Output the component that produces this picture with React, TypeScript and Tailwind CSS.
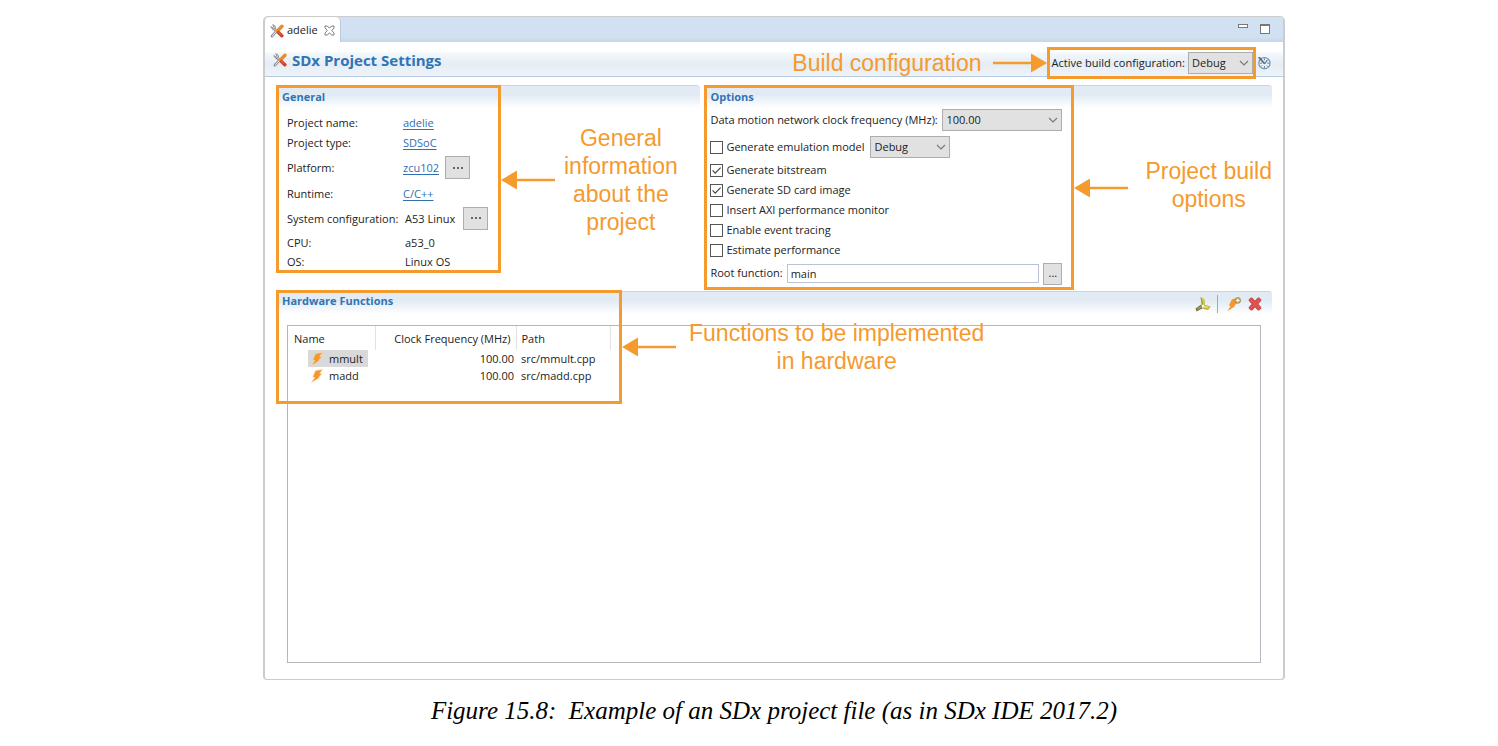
import type { ReactNode } from "react";

function ToolsIcon() {
  return (
    <svg viewBox="0 0 14 14" className="size-[14px] shrink-0" aria-hidden="true">
      <path d="M3.4 4.2 8 8.6" stroke="#858585" strokeWidth="2.8" strokeLinecap="round" />
      <path d="M3.6 4.4 8 8.6" stroke="#dcdcdc" strokeWidth="1.2" strokeLinecap="round" />
      <path d="M.8 2.4 2.4 3.8 3.8 2.6 2.6.8A2.8 2.8 0 0 1 5.4 4.4 2.8 2.8 0 0 1 .8 2.4Z" fill="#cfcfcf" stroke="#858585" strokeWidth=".8" />
      <path d="M6.4 7.4 2 12.2" stroke="#858585" strokeWidth="2.6" strokeLinecap="round" />
      <path d="M6.4 7.4 2.2 12" stroke="#e6e6e6" strokeWidth="1.1" strokeLinecap="round" />
      <path d="M12 2.2 7.6 6.8" stroke="#ef8a2c" strokeWidth="3.4" strokeLinecap="round" />
      <path d="M8.6 8.6 11.8 11.8" stroke="#cf3f2a" strokeWidth="3.4" strokeLinecap="round" />
      <path d="M8.4 8.2 10.6 10.4" stroke="#ea7a55" strokeWidth="1" strokeLinecap="round" />
    </svg>
  );
}

function CloseIcon() {
  return (
    <svg viewBox="0 0 11 11" className="size-[11px]" fill="#fff" stroke="#6d6d6d" strokeWidth=".9" aria-hidden="true">
      <path d="M1 1h2.4l2.1 2.2L7.6 1H10v1.8L7.8 5.5 10 8.2V10H7.6L5.5 7.8 3.4 10H1V8.2l2.2-2.7L1 2.8Z" />
    </svg>
  );
}

function BoltIcon() {
  return (
    <svg viewBox="0 0 14 14" className="size-[14px] shrink-0" aria-hidden="true">
      <path d="M5.6 1.6 12.4.6 9.8 4.4 11.8 5 8.6 8.2 9.4 8.8 1.4 13.6 4.8 8.6 2.8 7.8Z" fill="#f6962c" stroke="#fbd6a8" strokeWidth=".6" />
    </svg>
  );
}

function Chevron() {
  return (
    <svg viewBox="0 0 10 6" className="pointer-events-none absolute right-[4px] top-1/2 h-[6px] w-[10px] -translate-y-1/2" aria-hidden="true">
      <path d="M1 1l4 4 4-4" fill="none" stroke="#7a7a7a" strokeWidth="1.2" />
    </svg>
  );
}

function Dropdown({
  id,
  value,
  options,
  className,
  label,
}: {
  id: string;
  value: string;
  options: string[];
  className: string;
  label?: string;
}) {
  return (
    <span className={`relative inline-flex ${className}`}>
      <select
        id={id}
        aria-label={label}
        defaultValue={value}
        className="h-[22px] w-full appearance-none border border-[#adadad] bg-[#e1e1e1] pl-[3px] text-[11px] leading-[20px] text-[#222]"
      >
        {options.map((o) => (
          <option key={o}>{o}</option>
        ))}
      </select>
      <Chevron />
    </span>
  );
}

function BrowseButton({ label }: { label: string }) {
  return (
    <button
      type="button"
      aria-label={label}
      className="flex h-[23px] w-[25px] items-center justify-center border border-[#adadad] bg-[#e1e1e1]"
    >
      <svg viewBox="0 0 10 2" className="h-[2px] w-[10px]" fill="#666" aria-hidden="true">
        <path d="M0 0h2v2H0zM4 0h2v2H4zM8 0h2v2H8z" />
      </svg>
    </button>
  );
}

function ArrowLeft() {
  return (
    <svg viewBox="0 0 54 20" className="h-[20px] w-[54px] shrink-0" fill="#f59a2d" aria-hidden="true">
      <path d="M0 10 16 .5v19ZM14 8.7h40v2.6H14z" />
    </svg>
  );
}

function ArrowRight() {
  return (
    <svg viewBox="0 0 54 20" className="h-[20px] w-[54px] shrink-0" fill="#f59a2d" aria-hidden="true">
      <path d="M54 10 38 .5v19Z" />
      <path d="M0 8.7h40v2.6H0z" />
    </svg>
  );
}

function Callout({ children }: { children: ReactNode }) {
  return (
    <p className="whitespace-nowrap text-center font-['Liberation_Sans',sans-serif] text-[23px] leading-[28px] text-[#f59a2d]">
      {children}
    </p>
  );
}

const stripClass =
  "rounded-t-[4px] border-t border-[#c3d5e7] bg-[linear-gradient(#e2ebf4_40%,#ffffff)] bg-[length:100%_22px] bg-no-repeat";

function SectionTitle({ children }: { children: ReactNode }) {
  return <h2 className="pl-[3px] text-[11px] font-bold leading-[18px] text-[#2f74b5]">{children}</h2>;
}

function Check({ id, label, checked = false }: { id: string; label: string; checked?: boolean }) {
  return (
    <span className="flex items-center gap-[3px]">
      <span className="relative flex">
        <input
          id={id}
          type="checkbox"
          defaultChecked={checked}
          className="peer size-[13px] appearance-none border border-[#555] bg-white"
        />
        <svg viewBox="0 0 13 13" className="pointer-events-none absolute left-0 top-0 hidden size-[13px] peer-checked:block" aria-hidden="true">
          <path d="M2.6 6.4 5.2 9.2 10.6 3.6" fill="none" stroke="#444" strokeWidth="1.2" />
        </svg>
      </span>
      <label htmlFor={id}>{label}</label>
    </span>
  );
}

function InfoLink({ children }: { children: ReactNode }) {
  return (
    <a href="#" className="text-[#2f6fb3] underline underline-offset-2">
      {children}
    </a>
  );
}

const checks = [
  { id: "bitstream", label: "Generate bitstream", checked: true },
  { id: "sdcard", label: "Generate SD card image", checked: true },
  { id: "axi", label: "Insert AXI performance monitor", checked: false },
  { id: "tracing", label: "Enable event tracing", checked: false },
  { id: "estimate", label: "Estimate performance", checked: false },
];

const functions = [
  { name: "mmult", clock: "100.00", path: "src/mmult.cpp", selected: true },
  { name: "madd", clock: "100.00", path: "src/madd.cpp", selected: false },
];

export default function App() {
  return (
    <main className="bg-white pb-4 pl-[50px] pt-[16px] font-['Open_Sans','Noto_Sans',sans-serif] text-[11px] text-[#222]">
      <figure className="mx-auto max-w-[1022px]">
        <div className="rounded-t-[5px] rounded-b-[4px] border-2 border-b border-t border-[#cccccc] bg-white">
          <div className="flex h-[25px] items-stretch justify-between rounded-t-[4px] bg-[linear-gradient(#d2e1f1_80%,#c6d5e8)]">
            <div className="flex items-center gap-[3px] rounded-t-[5px] border-r border-[#b8cbe0] bg-white px-[5px] pt-[2px]">
              <ToolsIcon />
              <span>adelie</span>
              <button type="button" aria-label="Close tab" className="ml-[3px]">
                <CloseIcon />
              </button>
            </div>
            <div className="flex items-start gap-[12px] pr-[13px] pt-[7px]">
              <button type="button" aria-label="Minimize" className="h-[4px] w-[10px] border border-[#777] bg-white" />
              <button type="button" aria-label="Maximize" className="h-[10px] w-[10px] border border-t-2 border-[#777] bg-white" />
            </div>
          </div>

          <header className="flex h-[35px] items-start justify-between border-b border-[#b3cae2] bg-[linear-gradient(#ffffff_28%,#f4f8fb_32%,#e5edf4_65%,#eef3f8)] pl-[8px] pr-[12px] pt-[5px]">
            <h1 className="flex items-center gap-[5px] text-[15px] font-bold leading-[26px] text-[#2f74b5]">
              <ToolsIcon />
              SDx Project Settings
            </h1>
            <div className="flex items-center">
              <Callout>Build configuration</Callout>
              <span className="ml-[11px] flex">
                <ArrowRight />
              </span>
              <div className="flex h-[32px] items-center gap-[3px] border-[3px] border-[#f59a2d] pl-[2px]">
                <label htmlFor="active">Active build configuration:</label>
                <Dropdown id="active" value="Debug" options={["Debug", "Release"]} className="w-[65px]" />
              </div>
              <button type="button" aria-label="Manage build configurations" className="ml-[1px]">
                <svg viewBox="0 0 14 14" className="size-[14px]" aria-hidden="true">
                  <circle cx="7.4" cy="7.2" r="5.6" fill="#eef4fa" stroke="#6f93b5" strokeWidth="1.2" />
                  <path d="M7.4 2.4v2M7.4 10v2M10.2 7.2h2M3 7.2h2M9.6 9.4l1.2 1.2M4 10.6l1.2-1.2M9.6 5l1.2-1.2" stroke="#5d7f9f" strokeWidth="1" />
                  <path d="M7.6 7.6 10 4.6" stroke="#4477a8" strokeWidth="1.2" />
                  <path d="M.8 1.6 3 1l5.4 6.4-1.2 1Z" fill="#5c6c78" />
                </svg>
              </button>
            </div>
          </header>

          <div className="px-[11px] pb-[16px] pt-[8px]">
            <div className="grid grid-cols-[427fr_565fr] gap-x-[4px]">
              <section className={`flex items-start ${stripClass}`}>
                <div className="flex items-center">
                  <div className="-mt-px w-[225px] border-[3px] border-[#f59a2d]">
                    <SectionTitle>General</SectionTitle>
                    <dl className="grid grid-cols-[116px_1fr] grid-rows-[26px_21px_29px_22px_28px_20px_18px] items-center pl-[8px] leading-[15px]">
                      <dt className="pt-[6px]">Project name:</dt>
                      <dd className="pt-[6px]">
                        <InfoLink>adelie</InfoLink>
                      </dd>
                      <dt>Project type:</dt>
                      <dd>
                        <InfoLink>SDSoC</InfoLink>
                      </dd>
                      <dt>Platform:</dt>
                      <dd className="flex items-center gap-[6px]">
                        <InfoLink>zcu102</InfoLink>
                        <BrowseButton label="Browse platforms" />
                      </dd>
                      <dt>Runtime:</dt>
                      <dd>
                        <InfoLink>C/C++</InfoLink>
                      </dd>
                      <dt>System configuration:</dt>
                      <dd className="flex items-center gap-[8px] pl-[2px]">
                        A53 Linux
                        <BrowseButton label="Browse system configurations" />
                      </dd>
                      <dt>CPU:</dt>
                      <dd className="pl-[2px]">a53_0</dd>
                      <dt>OS:</dt>
                      <dd className="pl-[2px]">Linux OS</dd>
                    </dl>
                  </div>
                  <ArrowLeft />
                  <div className="ml-[9px]">
                    <Callout>
                      General
                      <br />
                      information
                      <br />
                      about the
                      <br />
                      project
                    </Callout>
                  </div>
                </div>
              </section>

              <section className={`flex items-start ${stripClass}`}>
                <div className="flex items-center">
                  <div className="-mt-px w-[370px] border-[3px] border-[#f59a2d]">
                    <SectionTitle>Options</SectionTitle>
                    <div className="pl-[3px] pr-[9px]">
                      <div className="flex h-[28px] items-center justify-between">
                        <label htmlFor="freq">Data motion network clock frequency (MHz):</label>
                        <Dropdown id="freq" value="100.00" options={["100.00", "200.00"]} className="w-[120px]" />
                      </div>
                      <div className="flex h-[26px] items-center gap-[6px]">
                        <Check id="emulation" label="Generate emulation model" />
                        <Dropdown
                          id="emulation-mode"
                          label="Emulation model"
                          value="Debug"
                          options={["Debug", "Optimized"]}
                          className="w-[80px]"
                        />
                      </div>
                      {checks.map((c) => (
                        <div key={c.id} className="flex h-[20px] items-center">
                          <Check id={c.id} label={c.label} checked={c.checked} />
                        </div>
                      ))}
                      <div className="flex h-[27px] items-center gap-[4px]">
                        <label htmlFor="root">Root function:</label>
                        <input
                          id="root"
                          defaultValue="main"
                          className="h-[19px] min-w-0 flex-1 border border-[#b9c3d3] bg-white pl-[3px]"
                        />
                        <button
                          type="button"
                          aria-label="Browse root function"
                          className="h-[22px] w-[19px] border border-[#adadad] bg-[#e1e1e1]"
                        >
                          ...
                        </button>
                      </div>
                    </div>
                  </div>
                  <ArrowLeft />
                  <div className="ml-[17px] pb-[6px]">
                    <Callout>
                      Project build
                      <br />
                      options
                    </Callout>
                  </div>
                </div>
              </section>
            </div>

            <section className={`relative mt-px ${stripClass}`}>
              <div className="flex items-start justify-between">
                <div className="pl-[3px]">
                  <SectionTitle>Hardware Functions</SectionTitle>
                </div>
                <div className="flex items-center gap-[6px] pr-[10px] pt-[3px]">
                  <button type="button" aria-label="Clean">
                    <svg viewBox="0 0 16 16" className="size-[16px]" aria-hidden="true">
                      <path d="M5.4.8 9.6 4v5.4L6.6 10Z" fill="#aaa63c" />
                      <path d="M6.6.8 9.6 4v5L8.2 8Z" fill="#cfc658" />
                      <path d="M6.2 8.6 .6 12.6 1.6 15.6 7.6 12.2Z" fill="#77693a" />
                      <path d="M2 12.4 5.8 10 6.8 11.6 2.6 14Z" fill="#a79c4a" />
                      <path d="M9 8.6 15.6 10.6 13 14 7.2 12.6Z" fill="#b9a93c" />
                      <path d="M9.4 9.4 14.4 10.8 12.6 12.4 8.4 11.8Z" fill="#e2d867" />
                      <path d="M6.4 9 9 8.4 9.4 11 7.2 11.8Z" fill="#fbfaf0" />
                    </svg>
                  </button>
                  <span className="h-[18px] w-px bg-[#a8a8a8]" />
                  <button type="button" aria-label="Add hardware function" className="ml-[2px]">
                    <svg viewBox="0 0 16 16" className="size-[16px]" aria-hidden="true">
                      <path d="M6 3.2 12.6 1.8 10 6 11.4 7 8.4 9.6 9 10.2 1.4 15.2 4.6 10 2.8 9.4Z" fill="#f6962c" />
                      <circle cx="11.8" cy="4.4" r="2.9" fill="#c9ad62" stroke="#9a8a4a" strokeWidth=".7" />
                      <path d="M11.8 2.7v3.4M10.1 4.4h3.4" stroke="#fff" strokeWidth="1" />
                    </svg>
                  </button>
                  <button type="button" aria-label="Remove hardware function">
                    <svg viewBox="0 0 14 14" className="size-[14px]" aria-hidden="true">
                      <path
                        d="M1.2 2.4 2.8 1h1.4L7 4.2 9.8 1h1.4l1.6 1.4v1.4L9.8 7l3 3.2v1.4L11.2 13H9.8L7 9.8 4.2 13H2.8l-1.6-1.4v-1.4L4.2 7l-3-3.2Z"
                        fill="#e0524f"
                        stroke="#b83a3a"
                        strokeWidth=".8"
                      />
                    </svg>
                  </button>
                </div>
              </div>

              <div className="ml-[11px] mr-[11px] mt-[12px] h-[338px] border border-[#b4b7be] bg-white">
                <table className="w-[323px] table-fixed border-collapse leading-[17px]">
                  <thead>
                    <tr className="h-[24px]">
                      <th scope="col" className="w-[87px] border-r border-[#e2e2e2] p-0 pl-[6px] text-left font-normal">
                        Name
                      </th>
                      <th scope="col" className="w-[141px] border-r border-[#e2e2e2] p-0 pr-[5px] text-right font-normal">
                        Clock Frequency (MHz)
                      </th>
                      <th scope="col" className="border-r border-[#e2e2e2] p-0 pl-[5px] text-left font-normal">
                        Path
                      </th>
                    </tr>
                  </thead>
                  <tbody>
                    {functions.map((f) => (
                      <tr key={f.name}>
                        <td className="p-0 pl-[20px]">
                          <span
                            className={
                              f.selected
                                ? "flex w-[60px] items-center gap-[5px] bg-[#d9d9d9] pl-[2px]"
                                : "flex w-[60px] items-center gap-[5px] pl-[2px]"
                            }
                          >
                            <BoltIcon />
                            {f.name}
                          </span>
                        </td>
                        <td className="p-0 pr-[2px] text-right">{f.clock}</td>
                        <td className="p-0 pl-[5px]">{f.path}</td>
                      </tr>
                    ))}
                  </tbody>
                </table>
              </div>

              <div className="pointer-events-none absolute -top-[2px] left-0 flex items-center">
                <div className="h-[114px] w-[346px] border-[3px] border-[#f59a2d]" />
                <ArrowLeft />
                <div className="ml-[13px]">
                  <Callout>
                    Functions to be implemented
                    <br />
                    in hardware
                  </Callout>
                </div>
              </div>
            </section>
          </div>
        </div>
        <figcaption className="mt-[16px] whitespace-pre text-center font-['Liberation_Serif',serif] text-[25px] italic leading-[30px] text-black">
          {"Figure 15.8:  Example of an SDx project file (as in SDx IDE 2017.2)"}
        </figcaption>
      </figure>
    </main>
  );
}
